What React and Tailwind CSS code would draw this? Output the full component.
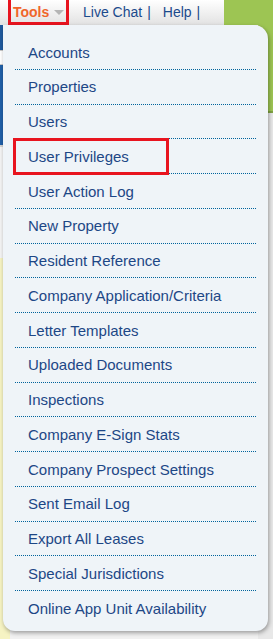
import React from 'react';

const items = [
  'Accounts',
  'Properties',
  'Users',
  'User Privileges',
  'User Action Log',
  'New Property',
  'Resident Reference',
  'Company Application/Criteria',
  'Letter Templates',
  'Uploaded Documents',
  'Inspections',
  'Company E-Sign Stats',
  'Company Prospect Settings',
  'Sent Email Log',
  'Export All Leases',
  'Special Jurisdictions',
  'Online App Unit Availability',
];

const App = () => {
  return (
    <div className="relative w-[273px] h-[639px] overflow-hidden bg-[#f1f1f1] font-['Liberation_Sans',Arial,sans-serif]">
      {/* Top nav bar */}
      <div className="flex h-[25px]">
        <div className="w-[224px] flex items-center bg-gradient-to-b from-white to-[#e2e2e2] text-[14px]">
          <div className="ml-[8px] -mt-[3px] h-[28px] w-[61px] border-[3px] border-[#e8141f] flex items-center pl-[2px] pt-[2px]">
            <span className="font-bold text-[#f0652a]">Tools</span>
            <span className="ml-[5px] mt-[1px] w-0 h-0 border-l-[5px] border-r-[5px] border-t-[5px] border-l-transparent border-r-transparent border-t-[#b5b5b5]"></span>
          </div>
          <div className="ml-[14px] flex items-center text-[#1b4a8c]">
            <span>Live Chat</span>
            <span className="ml-[5px]">|</span>
            <span className="ml-[12px]">Help</span>
            <span className="ml-[5px]">|</span>
          </div>
        </div>
        <div className="flex-1 bg-[#9dc553]"></div>
      </div>

      {/* Page behind the menu */}
      <div className="flex h-[614px]">
        <div className="w-[10px] flex flex-col">
          <div className="h-[25px] bg-[#1f5a9e]"></div>
          <div className="h-[15px] bg-white border-y border-[#c8c8c8]"></div>
          <div className="h-[80px] bg-[#2060a8]"></div>
          <div className="h-[113px] bg-[#f4f4f4] border-t-2 border-[#d4d4d4]"></div>
          <div className="flex-1 bg-[#f6f3c3]"></div>
        </div>
        <div className="flex-1"></div>
        <div className="w-[15px] flex flex-col">
          <div className="h-[88px] bg-[#9dc553] border-b-2 border-[#7fa343]"></div>
          <div className="flex-1 bg-[#e8e8e8]"></div>
        </div>
      </div>

      {/* Tools dropdown */}
      <div className="absolute top-[25px] left-[3px] w-[265px] h-[606px] bg-[#eff4f8] rounded-tr-[14px] rounded-b-[12px] shadow-[1px_2px_4px_rgba(0,0,0,0.35)] pt-[10px]">
        <ul>
          {items.map((item, i) => (
            <li key={item} className="relative px-[12px]">
              <div
                className={
                  i === items.length - 1
                    ? 'h-[34.75px] flex items-center pl-[13px] pt-[2px] text-[15px] text-[#1d4786]'
                    : 'h-[34.75px] flex items-center pl-[13px] pt-[2px] text-[15px] text-[#1d4786] border-b border-dotted border-[#00639c]'
                }
              >
                {item}
              </div>
              {item === 'User Privileges' && (
                <span className="absolute left-[10px] -top-[1px] w-[156px] h-[37px] border-[3px] border-[#e8141f]"></span>
              )}
            </li>
          ))}
        </ul>
      </div>
    </div>
  );
};

export default App;
